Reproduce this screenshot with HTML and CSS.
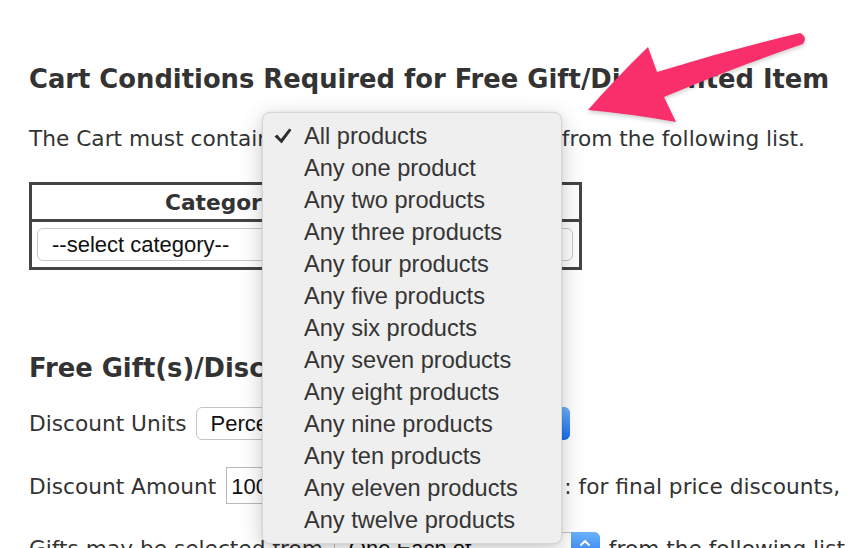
FILE: index.html
```html
<!DOCTYPE html>
<html>
<head>
<meta charset="utf-8">
<link rel="stylesheet" href="styles.css">
</head>
<body>
<div class="page">
  <h1 class="title">Cart Conditions Required for Free Gift/Discounted Item</h1>
  <p class="line">The Cart must contain <span class="sel-cond"></span> from the following list.</p>
  <table class="cat-table">
    <tr><th class="th-cat">Category</th><th class="th-prod"></th></tr>
    <tr><td colspan="2"><div class="sel-cat">--select category--</div></td></tr>
  </table>
  <h2 class="title title-2">Free Gift(s)/Discount</h2>
  <div class="row row-units">
    <span>Discount Units</span>
    <span class="sel sel-units"><span class="sel-text">Percent</span><span class="sel-btn"><svg width="12" height="20" viewBox="0 0 12 20"><path d="M2 7 L6 3 L10 7 M2 13 L6 17 L10 13" fill="none" stroke="#fff" stroke-width="2" stroke-linecap="round" stroke-linejoin="round"/></svg></span></span>
  </div>
  <div class="row row-amount">
    <span>Discount Amount</span>
    <span class="input">100</span>
    <span class="after-input">: for final price discounts,</span>
  </div>
  <div class="row row-gifts">
    <span>Gifts may be selected from</span>
    <span class="sel sel-gifts"><span class="sel-text">One Each of</span><span class="sel-btn"><svg width="12" height="20" viewBox="0 0 12 20"><path d="M2 7 L6 3 L10 7 M2 13 L6 17 L10 13" fill="none" stroke="#fff" stroke-width="2" stroke-linecap="round" stroke-linejoin="round"/></svg></span></span>
    <span class="after-sel">from the following list</span>
  </div>
</div>

<div class="menu">
  <div class="menu-item checked"><svg class="check" width="18" height="16" viewBox="0 0 18 16"><path d="M0.5 8.5 L3.2 6.6 L7 11 L15.2 0.5 L17.5 2 L7.6 15.5 Z" fill="#2e2e2e"/></svg>All products</div>
  <div class="menu-item">Any one product</div>
  <div class="menu-item">Any two products</div>
  <div class="menu-item">Any three products</div>
  <div class="menu-item">Any four products</div>
  <div class="menu-item">Any five products</div>
  <div class="menu-item">Any six products</div>
  <div class="menu-item">Any seven products</div>
  <div class="menu-item">Any eight products</div>
  <div class="menu-item">Any nine products</div>
  <div class="menu-item">Any ten products</div>
  <div class="menu-item">Any eleven products</div>
  <div class="menu-item">Any twelve products</div>
</div>

<svg class="arrow" width="852" height="548" viewBox="0 0 852 548">
  <path d="M800 33 Q808 37 803 44 Q732 68 664 97 L676 122 Q632 114 588 110 Q616 78 648 47 L657 72 Q728 50 800 33 Z" fill="#f92f6c"/>
</svg>
</body>
</html>
```
FILE: styles.css
```css
html, body {
  margin: 0;
  padding: 0;
}
body {
  width: 852px;
  height: 548px;
  overflow: hidden;
  position: relative;
  background: #fff;
  font-family: "DejaVu Sans", Verdana, sans-serif;
  font-size: 21.7px;
  color: #333;
}
.page {
  padding: 63px 0 0 29px;
  white-space: nowrap;
}
.title {
  margin: 0;
  font-size: 25.8px;
  line-height: 32px;
  font-weight: bold;
  color: #333;
}
.title-2 {
  margin-top: 81.5px;
}
.line {
  margin: 27.5px 0 0;
  line-height: 32px;
}
.sel-cond {
  display: inline-block;
  width: 277px;
  height: 20px;
  vertical-align: middle;
}
.cat-table {
  margin-top: 27.5px;
  box-sizing: border-box;
  width: 553px;
  border-collapse: separate;
  border-spacing: 0;
  border: 3px solid #444;
}
.cat-table th {
  padding: 2px 0 0;
  line-height: 32px;
  font-weight: bold;
  text-align: center;
  border-bottom: 3px solid #444;
}
.th-cat {
  width: 377px;
}
.cat-table td {
  padding: 6px 6px 6px 5px;
}
.sel-cat {
  box-sizing: border-box;
  height: 33px;
  border: 1px solid #c8c8c8;
  border-radius: 6px;
  background: #fff;
  padding-left: 14px;
  font-family: "Liberation Sans", Arial, sans-serif;
  font-size: 22px;
  line-height: 31px;
  color: #111;
}
.row {
  display: flex;
  align-items: baseline;
}
.row-units {
  margin-top: 23px;
}
.row-amount {
  margin-top: 27px;
}
.row-gifts {
  margin-top: 28px;
}
.sel {
  display: inline-flex;
  box-sizing: border-box;
  height: 33px;
  border: 1px solid #c4c4c4;
  border-radius: 6px;
  background: #fff;
  font-family: "Liberation Sans", Arial, sans-serif;
  font-size: 22px;
  color: #111;
}
.sel-text {
  padding: 3px 0 0 14px;
  line-height: 25px;
}
.sel-btn {
  margin: -1px -1px -1px auto;
  width: 29px;
  display: flex;
  align-items: center;
  justify-content: center;
  border-radius: 0 6px 6px 0;
  background: linear-gradient(#6cb2fb, #1a6ff0);
}
.sel-units {
  margin-left: 9px;
  width: 374px;
}
.sel-gifts {
  margin-left: 11px;
  width: 266px;
}
.input {
  margin-left: 10px;
  box-sizing: border-box;
  width: 331px;
  border: 1px solid #b8b8b8;
  padding: 6px 4px 3px;
  line-height: 26px;
  font-family: "Liberation Sans", Arial, sans-serif;
  font-size: 22px;
  color: #111;
}
.after-input {
  margin-left: 7px;
}
.after-sel {
  margin-left: 9px;
}
.menu {
  position: absolute;
  left: 262px;
  top: 111.5px;
  width: 300px;
  box-sizing: border-box;
  padding: 7.5px 0 7px;
  border: 1px solid #d6d6d6;
  border-radius: 8px;
  background: #efefef;
  box-shadow: 0 6px 22px rgba(0, 0, 0, 0.22), 0 0 3px rgba(0, 0, 0, 0.08);
  font-family: "Liberation Sans", Arial, sans-serif;
  font-size: 23.6px;
  color: #353535;
}
.menu-item {
  position: relative;
  line-height: 32px;
  padding-left: 41px;
  white-space: nowrap;
}
.check {
  position: absolute;
  left: 11px;
  top: 8px;
}
.arrow {
  position: absolute;
  left: 0;
  top: 0;
  pointer-events: none;
  filter: drop-shadow(0 2px 2px rgba(0, 0, 0, 0.2));
}
```
